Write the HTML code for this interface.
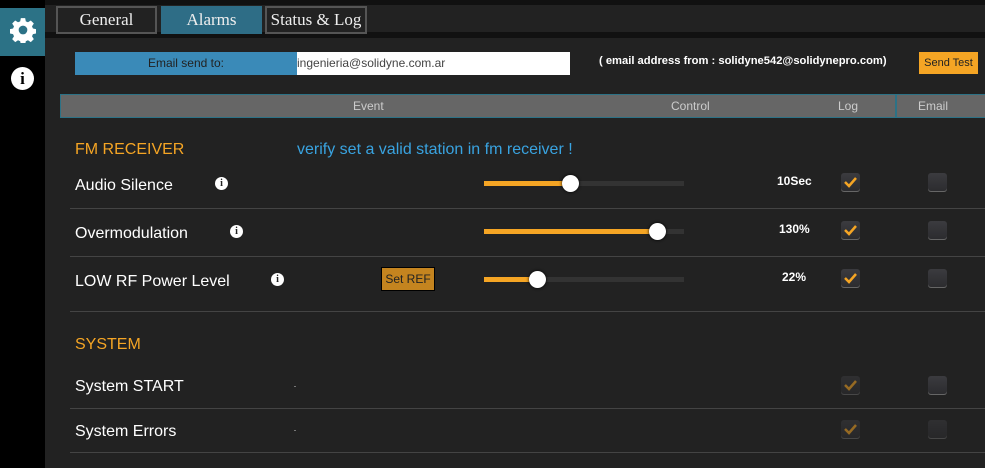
<!DOCTYPE html><html><head><style>
body{margin:0;width:985px;height:468px;background:#222;overflow:hidden;position:relative;font-family:"Liberation Sans",sans-serif;}
.a{position:absolute}
.tab{position:absolute;top:6px;height:24px;border:2px solid #555;color:#eee;font:17px "Liberation Serif",serif;text-align:center;line-height:24px;background:#222}
.lbl{position:absolute;left:75px;color:#fff;font-size:16px}
.line{position:absolute;left:70px;right:0;height:1px;background:#444}
.track{position:absolute;left:484px;width:200px;height:5px;background:#333}
.fill{position:absolute;left:0;top:0;height:5px;background:#f5a524}
.knob{position:absolute;top:-6px;width:17px;height:17px;border-radius:50%;background:#fff;box-shadow:0 0 3px #000;margin-left:-8px}
.cb{position:absolute;width:19px;height:19px;border-radius:3px;background:linear-gradient(#3b3b3f,#2b2b2e);box-shadow:inset 0 -1px 0 #666}
.cb svg{position:absolute;left:2px;top:3px}
.val{position:absolute;color:#fff;font-size:12px;font-weight:bold}
.info{position:absolute;width:13px;height:13px;border-radius:50%;background:#fff;color:#222;font:bold 10px "Liberation Serif",serif;text-align:center;line-height:13px}
.dot{position:absolute;left:294px;width:2px;height:1px;background:#777}
</style></head><body>
<div class="a" style="left:0;top:0;width:45px;height:468px;background:#000"></div>
<div class="a" style="left:0;top:8px;width:45px;height:48px;background:#2c7286"></div>
<svg class="a" style="left:10px;top:17px" width="26" height="26" viewBox="0 0 24 24"><path fill="#fff" d="M10 1h4l.6 3 2 .9 2.6-1.7 2.8 2.8-1.7 2.6.9 2 3 .6v4l-3 .6-.9 2 1.7 2.6-2.8 2.8-2.6-1.7-2 .9-.6 3h-4l-.6-3-2-.9-2.6 1.7-2.8-2.8 1.7-2.6-.9-2-3-.6v-4l3-.6.9-2-1.7-2.6 2.8-2.8 2.6 1.7 2-.9z"/><circle cx="12" cy="12" r="4" fill="#2c7286"/></svg>
<div class="a" style="left:11px;top:67px;width:23px;height:23px;border-radius:50%;background:#fff;color:#000;font:bold 17px 'Liberation Serif',serif;text-align:center;line-height:23px">i</div>
<div class="a" style="left:45px;top:0;right:0;height:5px;background:#111"></div>
<div class="a" style="left:45px;top:32px;right:0;height:6px;background:#111"></div>
<div class="tab" style="left:56px;width:97px">General</div>
<div class="tab" style="left:161px;width:97px;background:#2e6d86;border-color:#2e6d86">Alarms</div>
<div class="tab" style="left:265px;width:98px">Status &amp; Log</div>
<div class="a" style="left:75px;top:52px;width:222px;height:23px;background:#3a8ab8;color:#222;font-size:12px;text-align:center;line-height:23px">Email send to:</div>
<div class="a" style="left:297px;top:52px;width:273px;height:23px;background:#fff;color:#444;font-size:12px;line-height:23px">ingenieria@solidyne.com.ar</div>
<div class="a" style="left:599px;top:55px;color:#fff;font-size:11.2px;font-weight:bold">( email address from : solidyne542@solidynepro.com)</div>
<div class="a" style="left:919px;top:52px;width:59px;height:22px;background:#f5a524;color:#222;font-size:11px;text-align:center;line-height:22px">Send Test</div>
<div class="a" style="left:60px;top:94px;width:925px;height:22px;background:#666;border-top:1px solid #2c7286;border-bottom:1px solid #2c7286;border-left:1px solid #2c7286;color:#ccc;font-size:12px;line-height:22px">
<span class="a" style="left:292px">Event</span><span class="a" style="left:610px">Control</span><span class="a" style="left:777px">Log</span><span class="a" style="left:834px;top:0;width:2px;height:22px;background:#2c7286"></span><span class="a" style="left:857px">Email</span></div>
<div class="lbl" style="top:141px;color:#f5a524">FM RECEIVER</div>
<div class="a" style="left:297px;top:141px;color:#39a3e0;font-size:16px">verify set a valid station in fm receiver !</div>
<div class="lbl" style="top:177px">Audio Silence</div><div class="info" style="left:215px;top:177px">i</div>
<div class="track" style="top:181px"><div class="fill" style="width:86px"></div><div class="knob" style="left:86px"></div></div>
<div class="val" style="left:777px;top:174px">10Sec</div>
<div class="line" style="top:208px"></div>
<div class="lbl" style="top:225px">Overmodulation</div><div class="info" style="left:230px;top:225px">i</div>
<div class="track" style="top:229px"><div class="fill" style="width:173px"></div><div class="knob" style="left:173px"></div></div>
<div class="val" style="left:779px;top:222px">130%</div>
<div class="line" style="top:256px"></div>
<div class="lbl" style="top:273px">LOW RF Power Level</div><div class="info" style="left:271px;top:273px">i</div>
<div class="a" style="left:381px;top:267px;width:52px;height:22px;background:#c4841f;border:1px solid #000;color:#222;font-size:12px;text-align:center;line-height:22px">Set REF</div>
<div class="track" style="top:277px"><div class="fill" style="width:53px"></div><div class="knob" style="left:53px"></div></div>
<div class="val" style="left:782px;top:270px">22%</div>
<div class="line" style="top:311px"></div>
<div class="lbl" style="top:336px;color:#f5a524">SYSTEM</div>
<div class="lbl" style="top:378px">System START</div><div class="dot" style="top:386px"></div>
<div class="line" style="top:408px"></div>
<div class="lbl" style="top:423px">System Errors</div><div class="dot" style="top:430px"></div>
<div class="line" style="top:452px"></div>
<div class="cb" style="left:841px;top:173px"><svg width="15" height="13"><path d="M2 6l4 4 7-8" stroke="#f5a524" stroke-width="2.5" fill="none"/></svg></div>
<div class="cb" style="left:928px;top:173px"></div>
<div class="cb" style="left:841px;top:221px"><svg width="15" height="13"><path d="M2 6l4 4 7-8" stroke="#f5a524" stroke-width="2.5" fill="none"/></svg></div>
<div class="cb" style="left:928px;top:221px"></div>
<div class="cb" style="left:841px;top:269px"><svg width="15" height="13"><path d="M2 6l4 4 7-8" stroke="#f5a524" stroke-width="2.5" fill="none"/></svg></div>
<div class="cb" style="left:928px;top:269px"></div>
<div class="cb" style="left:841px;top:376px;opacity:.55"><svg width="15" height="13"><path d="M2 6l4 4 7-8" stroke="#f5a524" stroke-width="2.5" fill="none"/></svg></div>
<div class="cb" style="left:928px;top:376px"></div>
<div class="cb" style="left:841px;top:420px;opacity:.55"><svg width="15" height="13"><path d="M2 6l4 4 7-8" stroke="#f5a524" stroke-width="2.5" fill="none"/></svg></div>
<div class="cb" style="left:928px;top:420px;opacity:.55"></div>
</body></html>
